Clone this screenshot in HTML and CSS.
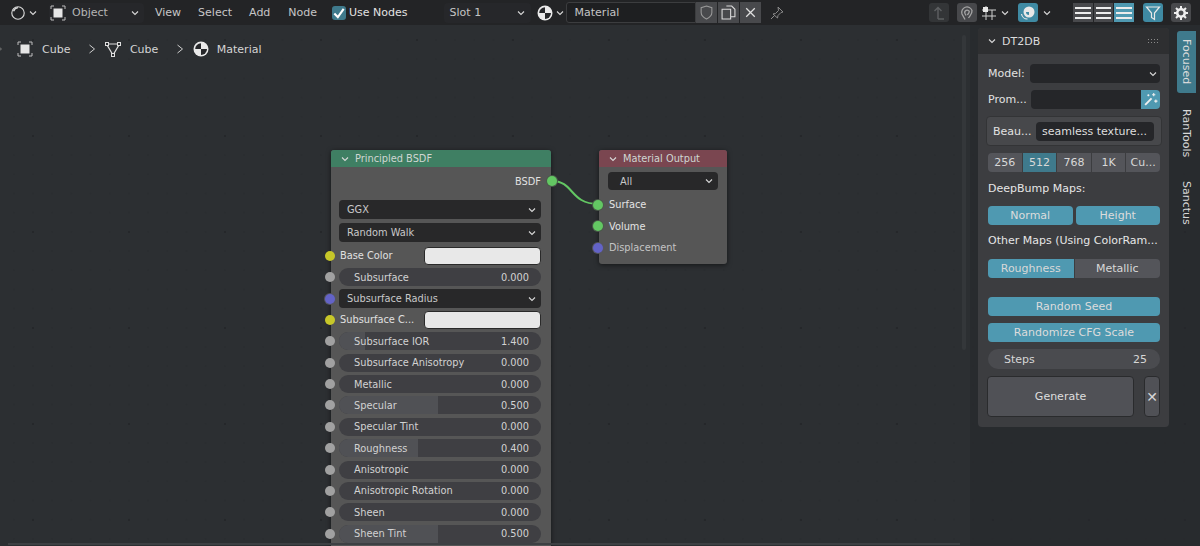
FILE: index.html
```html
<!DOCTYPE html>
<html>
<head>
	<title>Shader Editor</title>
	<meta charset="utf-8">
	<link rel="stylesheet" href="styles.css">
</head>
<body>

	<div class="topbar">
		<svg class="ico editor-ico" viewBox="0 0 18 18"><circle cx="9" cy="9" r="7" fill="none" stroke="#d8d8d8" stroke-width="1.3"/><path d="M4 7a6 6 0 0 1 5-4" fill="none" stroke="#d8d8d8" stroke-width="1.6"/></svg>
		<svg class="chev" viewBox="0 0 8 8"><path d="M1 2.5l3 3 3-3"/></svg>
		<div class="mode">
			<svg class="ico" viewBox="0 0 16 16"><path class="corners" d="M1 4V1h3M12 1h3v3M15 12v3h-3M4 15H1v-3"/><rect x="3.5" y="3.5" width="9" height="9" fill="#e6e6e6"/></svg>
			<span class="mode-label">Object</span>
			<svg class="chev" viewBox="0 0 8 8"><path d="M1 2.5l3 3 3-3"/></svg>
		</div>
		<span class="menu m-view">View</span>
		<span class="menu m-select">Select</span>
		<span class="menu m-add">Add</span>
		<span class="menu m-node">Node</span>
		<span class="check"><svg viewBox="0 0 12 12"><path d="M2 6.500l3 3 5-7"/></svg></span>
		<span class="menu m-use">Use Nodes</span>
		<div class="slot">
			<span>Slot 1</span>
			<svg class="chev" viewBox="0 0 8 8"><path d="M1 2.500l3 3 3-3"/></svg>
		</div>
		<svg class="ico ball-top" viewBox="0 0 16 16"><use href="#ball"/></svg>
		<svg class="chev" viewBox="0 0 8 8"><path d="M1 2.500l3 3 3-3"/></svg>
		<div class="matname">Material</div>
		<div class="matbtn"><svg viewBox="0 0 14 14"><path d="M7 1l5 1.500V7c0 3-2.500 4.800-5 6-2.500-1.200-5-3-5-6V2.500z" fill="none" stroke="#9a9a9a"/></svg></div>
		<div class="matbtn"><svg viewBox="0 0 14 14"><path d="M5 1h5l3 3v7H9M1 4h8v9H1z" fill="none" stroke="#dcdcdc"/></svg></div>
		<div class="matbtn"><svg viewBox="0 0 14 14"><path d="M3 3l8 8M11 3l-8 8" stroke="#e0e0e0" stroke-width="1.200"/></svg></div>
		<svg class="ico pin" viewBox="0 0 16 16"><path d="M9 2l5 5-2 .5-3 3-.5 2.500L4 9l2.500-.5 3-3zM5.500 10.500L2 14" fill="none" stroke="#8b8b8b"/></svg>

		<div class="right-tools">
			<div class="tbtn parent"><svg viewBox="0 0 16 16"><path d="M7 14V3M3.500 6L7 2.500 10.500 6M7 14h6" fill="none" stroke="#5e6062" stroke-width="1.400"/></svg></div>
			<div class="tbtn snap"><svg viewBox="0 0 16 16"><path d="M6 14.500L3 9a5.200 5.200 0 0 1 10-3.500c.5 3-2 5-3.500 7.500M7 10.500L6 8.500A2.300 2.300 0 0 1 10.300 6.500c0 1.500-1.300 2.500-2 3.500" fill="none" stroke="#a4a4a4" stroke-width="1.300"/></svg></div>
			<svg class="ico snapgrid" viewBox="0 0 16 16"><path d="M1 5h14M1 11h14M5 1v14M11 5v10" stroke="#cfcfcf"/><rect x="2" y="2" width="5" height="5" fill="#e8e8e8"/></svg>
			<svg class="chev" viewBox="0 0 8 8"><path d="M1 2.500l3 3 3-3"/></svg>
			<div class="tbtn overlay-btn"><svg viewBox="0 0 16 16"><circle cx="9" cy="7" r="5.500" fill="#e8e8e8"/><path d="M9 7l-3 0a3 3 0 0 0 3 3z" fill="#3f8aa3"/><path d="M1.500 9a6 6 0 0 0 6 5" fill="none" stroke="#e8e8e8" stroke-width="1.200"/></svg></div>
			<svg class="chev chev-gap" viewBox="0 0 8 8"><path d="M1 2.500l3 3 3-3"/></svg>
			<div class="bars">
				<div class="bar-btn"><i></i><i></i><i></i></div>
				<div class="bar-btn"><i></i><i></i><i></i></div>
				<div class="bar-btn on"><i></i><i></i><i></i></div>
			</div>
			<div class="tbtn filter"><svg viewBox="0 0 16 16"><path d="M1.500 2h13L9.500 8v6.500l-3-2V8z" fill="none" stroke="#e8e8e8" stroke-width="1.200"/></svg></div>
			<div class="tbtn gear"><svg viewBox="0 0 16 16"><circle cx="8" cy="8" r="3.800" fill="none" stroke="#eee" stroke-width="2.600"/><path d="M8 1v3M8 12v3M1 8h3M12 8h3M3 3l2 2M11 11l2 2M13 3l-2 2M5 11l-2 2" stroke="#eee" stroke-width="2"/></svg></div>
		</div>
	</div>

	<div class="canvas">
		<svg width="0" height="0" class="defs"><defs>
			<g id="ball"><circle cx="8" cy="8" r="7.500" fill="#eaeaea"/><path d="M8 8V2.200A5.800 5.800 0 0 0 2.200 8z" fill="#26272a"/><path d="M8 8h6a6 6 0 0 1-6 6z" fill="#26272a"/></g>
		</defs></svg>

		<div class="crumbs">
			<svg class="sep lead" viewBox="0 0 8 10"><path d="M1.500 1l5 4-5 4"/></svg>
			<svg class="ico" viewBox="0 0 16 16"><path class="corners" d="M1 4V1h3M12 1h3v3M15 12v3h-3M4 15H1v-3"/><rect x="3.500" y="3.500" width="9" height="9" fill="#e6e6e6"/></svg>
			<span class="crumb c1">Cube</span>
			<svg class="sep" viewBox="0 0 8 10"><path d="M1.500 1l5 4-5 4"/></svg>
			<svg class="ico" viewBox="0 0 16 16"><path d="M1.500 3h13L8 14z" fill="none" stroke="#dedede" stroke-width="1.200"/><rect x=".5" y="1.500" width="3" height="3" fill="#2b2e31" stroke="#dedede"/><rect x="12.500" y="1.500" width="3" height="3" fill="#2b2e31" stroke="#dedede"/><rect x="6.500" y="12.500" width="3" height="3" fill="#2b2e31" stroke="#dedede"/></svg>
			<span class="crumb c2">Cube</span>
			<svg class="sep" viewBox="0 0 8 10"><path d="M1.500 1l5 4-5 4"/></svg>
			<svg class="ico" viewBox="0 0 16 16"><use href="#ball"/></svg>
			<span class="crumb c3">Material</span>
		</div>

		<svg class="wire" width="60" height="40" viewBox="0 0 60 40"><path d="M4 6C26 6 22 29 50 29" fill="none" stroke="#63c763" stroke-width="2"/></svg>

		<div class="node bsdf">
			<div class="node-head head-green"><svg class="chev" viewBox="0 0 8 8"><path d="M1 2.500l3 3 3-3"/></svg>Principled BSDF</div>
			<div class="output-row">BSDF<span class="sock green out"></span></div>
			<div class="drop first"><span>GGX</span><svg class="chev" viewBox="0 0 8 8"><path d="M1 2.500l3 3 3-3"/></svg></div>
			<div class="drop"><span>Random Walk</span><svg class="chev" viewBox="0 0 8 8"><path d="M1 2.500l3 3 3-3"/></svg></div>
			<div class="row color"><span class="sock yellow"></span><span class="col-label">Base Color</span><span class="swatch"></span></div>
			<div class="row"><span class="sock grey"></span><div class="slider"><span>Subsurface</span><b>0.000</b></div></div>
			<div class="row"><span class="sock purple"></span><div class="drop inrow"><span>Subsurface Radius</span><svg class="chev" viewBox="0 0 8 8"><path d="M1 2.500l3 3 3-3"/></svg></div></div>
			<div class="row color"><span class="sock yellow"></span><span class="col-label">Subsurface C...</span><span class="swatch"></span></div>
			<div class="row"><span class="sock grey"></span><div class="slider"><i style="width: 13%"></i><span>Subsurface IOR</span><b>1.400</b></div></div>
			<div class="row"><span class="sock grey"></span><div class="slider"><span>Subsurface Anisotropy</span><b>0.000</b></div></div>
			<div class="row"><span class="sock grey"></span><div class="slider"><span>Metallic</span><b>0.000</b></div></div>
			<div class="row"><span class="sock grey"></span><div class="slider"><i style="width: 49%"></i><span>Specular</span><b>0.500</b></div></div>
			<div class="row"><span class="sock grey"></span><div class="slider"><span>Specular Tint</span><b>0.000</b></div></div>
			<div class="row"><span class="sock grey"></span><div class="slider"><i style="width: 39%"></i><span>Roughness</span><b>0.400</b></div></div>
			<div class="row"><span class="sock grey"></span><div class="slider"><span>Anisotropic</span><b>0.000</b></div></div>
			<div class="row"><span class="sock grey"></span><div class="slider"><span>Anisotropic Rotation</span><b>0.000</b></div></div>
			<div class="row"><span class="sock grey"></span><div class="slider"><span>Sheen</span><b>0.000</b></div></div>
			<div class="row"><span class="sock grey"></span><div class="slider"><i style="width: 49%"></i><span>Sheen Tint</span><b>0.500</b></div></div>
		</div>

		<div class="node output">
			<div class="node-head head-red"><svg class="chev" viewBox="0 0 8 8"><path d="M1 2.500l3 3 3-3"/></svg>Material Output</div>
			<div class="drop all"><span>All</span><svg class="chev" viewBox="0 0 8 8"><path d="M1 2.500l3 3 3-3"/></svg></div>
			<div class="in-row"><span class="sock green"></span>Surface</div>
			<div class="in-row"><span class="sock green"></span>Volume</div>
			<div class="in-row dim"><span class="sock purple"></span>Displacement</div>
		</div>

		<div class="vscroll"></div>
		<div class="hscroll"></div>

		<div class="side">
			<div class="panel">
				<div class="panel-head">
					<svg class="chev" viewBox="0 0 8 8"><path d="M1 2.500l3 3 3-3"/></svg>
					<span>DT2DB</span>
					<svg class="grip" viewBox="0 0 12 6"><path d="M1 1h1v1H1zM4 1h1v1H4zM7 1h1v1H7zM10 1h1v1h-1zM1 4h1v1H1zM4 4h1v1H4zM7 4h1v1H7zM10 4h1v1h-1z"/></svg>
				</div>
				<div class="panel-body">
					<div class="line model">
						<label>Model:</label>
						<div class="field f-model"><svg class="chev" viewBox="0 0 8 8"><path d="M1 2.500l3 3 3-3"/></svg></div>
					</div>
					<div class="line prompt">
						<label>Prom...</label>
						<div class="field f-prompt"></div>
						<div class="wand"><svg viewBox="0 0 14 14"><path d="M2 12l6-6" stroke="#f0f0f0" stroke-width="1.800"/><path d="M10 1v3M8.500 2.500h3M12 7v3M10.500 8.500h3M5 2v2M4 3h2" stroke="#f0f0f0"/></svg></div>
					</div>
					<div class="boxed">
						<label>Beau...</label>
						<div class="field f-beau">seamless texture...</div>
					</div>
					<div class="seg sizes">
						<span>256</span><span class="deep">512</span><span>768</span><span>1K</span><span>Cu...</span>
					</div>
					<div class="heading h-deep">DeepBump Maps:</div>
					<div class="pair">
						<span class="btn on">Normal</span>
						<span class="btn on">Height</span>
					</div>
					<div class="heading h-other">Other Maps (Using ColorRam...</div>
					<div class="seg maps">
						<span class="on">Roughness</span><span>Metallic</span>
					</div>
					<div class="btn on wide seed">Random Seed</div>
					<div class="btn on wide cfg">Randomize CFG Scale</div>
					<div class="steps"><span>Steps</span><span>25</span></div>
					<div class="gen-line">
						<div class="generate">Generate</div>
						<div class="cancel">&#x2715;</div>
					</div>
				</div>
			</div>
			<div class="tabs">
				<div class="tab active"><span>Focused</span></div>
				<div class="tab t-ran"><span>RanTools</span></div>
				<div class="tab t-san"><span>Sanctus</span></div>
			</div>
		</div>
	</div>

</body>
</html>
```

FILE: styles.css
```css
* {
	box-sizing: border-box;
}
body {
	margin: 0;
	width: 1200px;
	height: 546px;
	overflow: hidden;
	background-color: #2b2e31;
	color: #d6d6d6;
	font-family: "DejaVu Sans", sans-serif;
	font-size: 11px;
}
svg {
	display: block;
	flex: none;
}
.defs {
	position: absolute;
}
.ico {
	width: 16px;
	height: 16px;
}
.corners {
	fill: none;
	stroke: #bdbdbd;
	stroke-width: 1;
}
.chev {
	width: 8px;
	height: 8px;
	fill: none;
	stroke: #d8d8d8;
	stroke-width: 1.1;
}

/* top bar */
.topbar {
	height: 25px;
	background-color: #232426;
	display: flex;
	align-items: center;
	white-space: nowrap;
}
.editor-ico {
	margin-left: 10px;
	margin-right: 3px;
}
.mode {
	display: flex;
	align-items: center;
	width: 95px;
	height: 20px;
	margin-left: 12px;
	padding-left: 1px;
	background-color: #26272a;
	border-radius: 4px;
}
.mode-label {
	margin-left: 6px;
	width: 59px;
	color: #b4b4b4;
}
.menu {
	color: #c6c6c6;
}
.m-view {
	margin-left: 11px;
}
.m-select {
	margin-left: 17px;
}
.m-add {
	margin-left: 17px;
}
.m-node {
	margin-left: 18px;
}
.m-use {
	margin-left: 3px;
	color: #e2e2e2;
}
.check {
	width: 14px;
	height: 14px;
	margin-left: 15px;
	background-color: #3f7a8c;
	border-radius: 3px;
}
.check svg {
	width: 14px;
	height: 14px;
	fill: none;
	stroke: #fff;
	stroke-width: 1.800;
}
.slot {
	display: flex;
	align-items: center;
	justify-content: space-between;
	width: 87px;
	height: 20px;
	margin-left: 36px;
	padding: 0 6px;
	background-color: #26272a;
	border-radius: 4px;
	color: #c4c4c4;
}
.ball-top {
	margin-left: 6px;
	margin-right: 3px;
}
.matname {
	width: 130px;
	height: 21px;
	margin-left: 2px;
	padding-left: 8px;
	line-height: 20px;
	background-color: #1e1f21;
	border: 1px solid #3c3d3f;
	border-radius: 3px 0 0 3px;
	color: #c4c4c4;
}
.matbtn {
	width: 21px;
	height: 21px;
	margin-right: 1px;
	padding: 3px;
	background-color: #48494c;
}
.matbtn:last-of-type {
	border-radius: 0 3px 3px 0;
}
.pin {
	margin-left: 7px;
}
.right-tools {
	display: flex;
	align-items: center;
	position: absolute;
	right: 0;
	left: 929px;
	top: 3px;
}
.tbtn {
	width: 20px;
	height: 19px;
	padding: 2px;
	border-radius: 3px;
}
.parent {
	background-color: #333537;
}
.snap {
	margin-left: 8px;
	background-color: #47484b;
}
.snapgrid {
	margin-left: 4px;
	margin-right: 4px;
}
.overlay-btn {
	margin-left: 9px;
	background-color: #3f8aa3;
}
.chev-gap {
	margin-left: 5px;
}
.bars {
	display: flex;
	gap: 1px;
	margin-left: 22px;
}
.bar-btn {
	display: flex;
	flex-direction: column;
	justify-content: center;
	gap: 3px;
	width: 19.500px;
	height: 19px;
	padding: 0 2px;
	background-color: #48494c;
}
.bar-btn i {
	display: block;
	height: 2px;
	background-color: #ececec;
}
.bar-btn.on {
	background-color: #4f99b1;
}
.filter {
	margin-left: 9px;
	background-color: #3f8aa3;
}
.gear {
	margin-left: 8px;
	background-color: #48494c;
}

/* node canvas */
.canvas {
	position: relative;
	height: 521px;
	overflow: hidden;
	background-color: #2c2f32;
	background-image: radial-gradient(circle, #25272a 1.2px, transparent 1.6px), radial-gradient(circle, #2a2d30 1px, transparent 1.2px);
	background-size: 96px 96px, 19.200px 19.200px;
	background-position: -15px -33px, -15px -33px;
}
.crumbs {
	display: flex;
	align-items: center;
	height: 16px;
	position: relative;
	top: 16px;
}
.crumb {
	color: #d4d4d4;
}
.c1 {
	margin-left: 9px;
}
.c2 {
	margin-left: 9px;
}
.c3 {
	margin-left: 8px;
}
.sep {
	width: 8px;
	height: 10px;
	margin-left: 17.500px;
	margin-right: 9px;
	fill: none;
	stroke: #cfcfcf;
	stroke-width: 1;
}
.sep.lead {
	margin-left: -5px;
	margin-right: 14px;
	stroke: #777;
}
.wire {
	position: absolute;
	left: 548px;
	top: 150px;
	z-index: 2;
}
.node {
	position: absolute;
	background-color: #565656;
	border-radius: 3px;
	box-shadow: 0 1px 5px rgba(0, 0, 0, 0.55);
}
.bsdf {
	left: 331px;
	top: 125px;
	width: 220px;
	height: 396px;
	border-radius: 3px 3px 0 0;
}
.output {
	left: 599px;
	top: 125px;
	width: 128px;
	height: 114px;
}
.node-head {
	display: flex;
	align-items: center;
	gap: 6px;
	height: 17px;
	padding-left: 10px;
	border-radius: 3px 3px 0 0;
	font-size: 9.800px;
	color: #cfd6d2;
}
.head-green {
	background-color: #3f7f63;
}
.head-red {
	background-color: #7a4650;
}
.output-row {
	display: flex;
	justify-content: flex-end;
	align-items: center;
	height: 14px;
	margin-top: 7px;
	padding-right: 10px;
	position: relative;
	font-size: 9.800px;
	color: #e0e0e0;
}
.sock {
	position: absolute;
	left: -6px;
	top: 50%;
	width: 10px;
	height: 10px;
	margin-top: -5px;
	border-radius: 50%;
	z-index: 3;
}
.sock.out {
	left: auto;
	right: -6px;
}
.green {
	background-color: #63c763;
	box-shadow: 0 0 0 1px #4a5a4a;
}
.yellow {
	background-color: #c7c729;
}
.grey {
	background-color: #a1a1a1;
}
.purple {
	background-color: #6363c7;
	box-shadow: 0 0 0 1px #55555f;
}
.drop {
	display: flex;
	align-items: center;
	justify-content: space-between;
	height: 19px;
	margin: 4px 10px 0 8px;
	padding: 0 5px 0 8px;
	background-color: #282829;
	border-radius: 4px;
	font-size: 9.800px;
	color: #c9c9c9;
}
.drop.first {
	margin-top: 12px;
}
.drop.inrow {
	flex: 1;
	margin: 0;
}
.row {
	display: flex;
	align-items: center;
	position: relative;
	height: 18px;
	margin: 3.380px 10px 0 8px;
	font-size: 9.800px;
}
.row .sock {
	left: -14px;
}
.row.color {
	justify-content: space-between;
}
.row.color:nth-of-type(5) {
	margin-top: 4.800px;
}
.col-label {
	margin-left: 1px;
	color: #e0e0e0;
}
.swatch {
	width: 117px;
	height: 18px;
	background-color: #e8e8e8;
	border: 1px solid #2a2a2a;
	border-radius: 4px;
}
.slider {
	position: relative;
	display: flex;
	align-items: center;
	justify-content: space-between;
	width: 100%;
	height: 18px;
	padding: 0 12px 0 15px;
	background-color: #3f3f43;
	border-radius: 9px;
	overflow: hidden;
	color: #d2d2d2;
}
.slider i {
	position: absolute;
	left: 0;
	top: 0;
	bottom: 0;
	background-color: #505155;
}
.slider span,
.slider b {
	position: relative;
	font-weight: normal;
}
.drop.all {
	height: 18px;
	margin: 5px 9px 4px;
	padding-left: 12px;
}
.in-row {
	position: relative;
	height: 21.500px;
	padding-left: 10px;
	line-height: 21px;
	font-size: 9.800px;
	color: #e4e4e4;
}
.in-row.dim {
	color: #c4c4c4;
}
.vscroll {
	position: absolute;
	left: 962px;
	top: 10px;
	width: 4px;
	height: 315px;
	background-color: #34373a;
	border-radius: 2px;
}
.hscroll {
	position: absolute;
	left: 8px;
	right: 240px;
	top: 518px;
	height: 2px;
	background-color: #3d4043;
}

/* side panel */
.side {
	position: absolute;
	left: 970px;
	right: 0;
	top: 0;
	bottom: 0;
	display: flex;
	align-items: flex-start;
	padding: 3px 0 0 8px;
	background-color: rgba(38, 40, 43, 0.55);
}
.panel {
	width: 191px;
	height: 399px;
	background-color: #3c3d40;
	border-radius: 4px;
}
.panel-head {
	display: flex;
	align-items: center;
	height: 26px;
	padding: 0 10px;
	background-color: #2e2f31;
	border-radius: 4px 4px 0 0;
	color: #dcdcdc;
}
.panel-head span {
	margin-left: 6px;
	flex: 1;
}
.grip {
	width: 12px;
	height: 6px;
	fill: #8a8a8a;
}
.panel-body {
	padding: 10px 9px 0 10px;
}
.panel-body label {
	color: #e2e2e2;
}
.line {
	display: flex;
	align-items: center;
	height: 19px;
}
.line label {
	width: 42px;
}
.field {
	flex: 1;
	height: 19px;
	background-color: #252629;
	border-radius: 4px;
}
.f-model {
	display: flex;
	align-items: center;
	justify-content: flex-end;
	padding-right: 3px;
}
.prompt {
	margin-top: 7px;
}
.prompt label {
	width: 43px;
}
.f-prompt {
	border-radius: 4px 0 0 4px;
}
.wand {
	width: 19px;
	height: 19px;
	padding: 2px;
	background-color: #4f99b1;
	border-radius: 0 4px 4px 0;
}
.boxed {
	display: flex;
	align-items: center;
	height: 30px;
	margin: 7px -2px 0;
	padding: 0 7px 0 6px;
	background-color: #47484b;
	border: 1px solid #333436;
	border-radius: 4px;
}
.boxed label {
	width: 43px;
}
.f-beau {
	padding-left: 6px;
	line-height: 19px;
	color: #dedede;
}
.seg {
	display: flex;
	gap: 1px;
	height: 19px;
	margin-top: 7px;
	border-radius: 4px;
	overflow: hidden;
}
.seg span {
	flex: 1;
	text-align: center;
	line-height: 19px;
	background-color: #54555a;
	color: #d8d8d8;
}
.seg .deep {
	background-color: #3f7a8c;
}
.seg .on {
	background-color: #4f99b1;
}
.heading {
	height: 14px;
	line-height: 14px;
	color: #e6e6e6;
}
.h-deep {
	margin-top: 10px;
}
.h-other {
	margin-top: 9px;
}
.pair {
	display: flex;
	gap: 3px;
	margin-top: 10px;
}
.btn {
	height: 19px;
	line-height: 19px;
	text-align: center;
	border-radius: 4px;
	color: #dcdcdc;
}
.pair .btn {
	flex: 1;
}
.btn.on {
	background-color: #4f99b1;
}
.maps {
	margin-top: 11px;
}
.seed {
	margin-top: 19px;
}
.cfg {
	margin-top: 7px;
}
.steps {
	display: flex;
	justify-content: space-between;
	height: 20px;
	margin-top: 7px;
	padding: 0 13px 0 16px;
	line-height: 21px;
	background-color: #4a4b4f;
	border-radius: 10px;
	color: #d6d6d6;
}
.gen-line {
	display: flex;
	gap: 10px;
	margin: 7px 0 0 -1px;
}
.generate {
	width: 148px;
	height: 41px;
	line-height: 40px;
	text-align: center;
	background-color: #505156;
	border: 1px solid #2a2b2d;
	border-radius: 4px;
	color: #dedede;
}
.cancel {
	width: 16px;
	height: 41px;
	line-height: 40px;
	text-align: center;
	font-size: 14px;
	background-color: #505156;
	border: 1px solid #2a2b2d;
	border-radius: 4px;
}
.tabs {
	margin-left: 8px;
	width: 19px;
	margin-top: 3px;
}
.tab {
	display: flex;
	justify-content: center;
	writing-mode: vertical-rl;
	width: 19px;
	height: 62px;
	line-height: 19px;
	text-align: center;
	color: #d8d8d8;
}
.tab.active {
	background-color: #3f7a8c;
	border-radius: 3px 0 0 3px;
	color: #dcdcdc;
}
.t-ran {
	margin-top: 6px;
	height: 68px;
}
.t-san {
	margin-top: 5px;
}
```
